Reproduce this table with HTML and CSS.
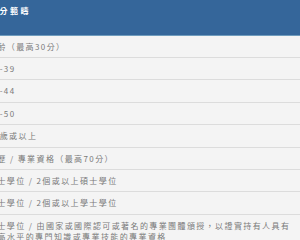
FILE: index.html
```html
<!DOCTYPE html>
<html lang="zh-Hant">
<head>
    <meta charset="UTF-8">
    <meta name="viewport" content="width=device-width, initial-scale=1.0">
    <title>綜合計分制</title>
    <link rel="stylesheet" href="styles.css">
</head>
<body>
    <div class="wrap">
        <table class="points">
            <thead>
                <tr>
                    <th>評分範疇</th>
                </tr>
            </thead>
            <tbody>
                <tr><td>年齡（最高30分）</td></tr>
                <tr><td>18-39</td></tr>
                <tr><td>40-44</td></tr>
                <tr><td>45-50</td></tr>
                <tr><td>51歲或以上</td></tr>
                <tr><td>學歷 / 專業資格（最高70分）</td></tr>
                <tr><td>博士學位 / 2個或以上碩士學位</td></tr>
                <tr><td>碩士學位 / 2個或以上學士學位</td></tr>
                <tr><td>學士學位 / 由國家或國際認可或著名的專業團體頒授，以證實持有人具有高水平的專門知識或專業技能的專業資格</td></tr>
            </tbody>
        </table>
    </div>
</body>
</html>
```

FILE: styles.css
```css
body {
    margin: 0;
    padding: 0;
    background-color: #3a3a3a;
    font-family: "Noto Sans CJK TC", "Liberation Sans", sans-serif;
    overflow: hidden;
}

.wrap {
    margin-left: -12px;
    width: 312px;
    background-color: #f4f4f4;
}

.points {
    width: 100%;
    border-collapse: collapse;
}

.points th {
    background-color: #35669a;
    color: #fff;
    font-size: 8px;
    font-weight: bold;
    letter-spacing: 2.5px;
    text-align: left;
    vertical-align: top;
    height: 35px;
    box-sizing: border-box;
    padding: 5px 0 0 1px;
    line-height: 12px;
    border-bottom: 1px solid #6f9cbd;
}

/* hanging indent so wrapped lines sit one character further in */
.points td {
    color: #7a7a7a;
    font-size: 8px;
    letter-spacing: 1.4px;
    line-height: 11.4px;
    padding: 5px 2px 5px 9.5px;
    text-indent: -9.5px;
    border-top: 1px solid #dcdcdc;
}

.points tbody tr:first-child td {
    border-top: none;
}

.points tbody tr:last-child td {
    padding-bottom: 2px;
}
```
